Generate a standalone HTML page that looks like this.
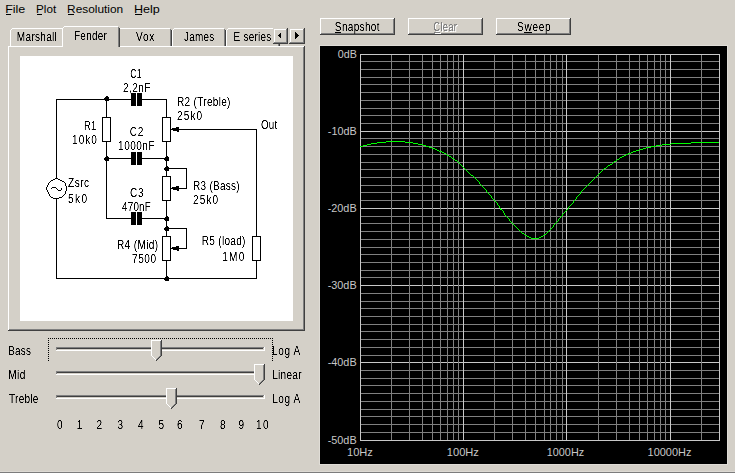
<!DOCTYPE html>
<html><head><meta charset="utf-8"><style>
html,body{margin:0;padding:0;background:#D4D0C8;}
body{width:735px;height:473px;overflow:hidden;}
svg{display:block;font-family:"Liberation Sans",sans-serif;font-size:11px;}
rect{shape-rendering:crispEdges;}
text.b{filter:url(#crisp);}

</style></head><body>
<svg width="735" height="473" viewBox="0 0 735 473">
<defs><filter id="crisp" x="-0.2" y="-0.6" width="1.4" height="2.2" color-interpolation-filters="sRGB"><feComponentTransfer><feFuncA type="linear" slope="2" intercept="-0.45"/></feComponentTransfer></filter></defs>
<rect x="0" y="0" width="735" height="473" fill="#D4D0C8"/>
<rect x="0" y="471" width="735" height="1" fill="#DDDAD4"/>
<rect x="0" y="472" width="735" height="1" fill="#7C7C7C"/>
<text x="5.16" y="13" font-size="11" fill="#000000" textLength="20.17" lengthAdjust="spacingAndGlyphs" class="m">File</text>
<rect x="6" y="14" width="5" height="1" fill="#000000"/>
<text x="36.04" y="13" font-size="11" fill="#000000" textLength="20.13" lengthAdjust="spacingAndGlyphs" class="m">Plot</text>
<rect x="37" y="14" width="5" height="1" fill="#000000"/>
<text x="67.12" y="13" font-size="11" fill="#000000" textLength="56.04" lengthAdjust="spacingAndGlyphs" class="m">Resolution</text>
<rect x="68" y="14" width="6" height="1" fill="#000000"/>
<text x="133.96" y="13" font-size="11" fill="#000000" textLength="25.86" lengthAdjust="spacingAndGlyphs" class="m">Help</text>
<rect x="135" y="14" width="7" height="1" fill="#000000"/>
<rect x="10" y="30" width="1" height="16" fill="#FFFFFF"/>
<rect x="11" y="29" width="1" height="1" fill="#FFFFFF"/>
<rect x="12" y="28" width="50" height="1" fill="#FFFFFF"/>
<rect x="62" y="29" width="1" height="17" fill="#808080"/>
<rect x="63" y="30" width="1" height="16" fill="#404040"/>
<rect x="118" y="30" width="1" height="16" fill="#FFFFFF"/>
<rect x="119" y="29" width="1" height="1" fill="#FFFFFF"/>
<rect x="120" y="28" width="50" height="1" fill="#FFFFFF"/>
<rect x="170" y="29" width="1" height="17" fill="#808080"/>
<rect x="171" y="30" width="1" height="16" fill="#404040"/>
<rect x="172" y="30" width="1" height="16" fill="#FFFFFF"/>
<rect x="173" y="29" width="1" height="1" fill="#FFFFFF"/>
<rect x="174" y="28" width="50" height="1" fill="#FFFFFF"/>
<rect x="224" y="29" width="1" height="17" fill="#808080"/>
<rect x="225" y="30" width="1" height="16" fill="#404040"/>
<rect x="226" y="30" width="1" height="16" fill="#FFFFFF"/>
<rect x="227" y="29" width="1" height="1" fill="#FFFFFF"/>
<rect x="228" y="28" width="50" height="1" fill="#FFFFFF"/>
<rect x="278" y="29" width="1" height="17" fill="#808080"/>
<rect x="279" y="30" width="1" height="16" fill="#404040"/>
<text transform="translate(16.86,41) scale(0.8400,1)" x="0" y="0" font-size="12" fill="#000000" letter-spacing="0.313" class="b">Marshall</text>
<text transform="translate(136.10,41) scale(0.8400,1)" x="0" y="0" font-size="12" fill="#000000" letter-spacing="0.833" class="b">Vox</text>
<text transform="translate(184.10,41) scale(0.8260,1)" x="0" y="0" font-size="12" fill="#000000" letter-spacing="0.300" class="b">James</text>
<text transform="translate(233.57,41) scale(0.8277,1)" x="0" y="0" font-size="12" fill="#000000" letter-spacing="0.300" class="b">E series</text>
<rect x="62" y="26" width="58" height="21" fill="#D4D0C8"/>
<rect x="62" y="28" width="1" height="19" fill="#FFFFFF"/>
<rect x="63" y="27" width="1" height="1" fill="#FFFFFF"/>
<rect x="64" y="26" width="54" height="1" fill="#FFFFFF"/>
<rect x="118" y="27" width="1" height="20" fill="#808080"/>
<rect x="119" y="28" width="1" height="19" fill="#404040"/>
<text transform="translate(74.07,40) scale(0.8260,1)" x="0" y="0" font-size="12" fill="#000000" letter-spacing="0.300" class="b">Fender</text>
<rect x="8" y="46" width="55" height="1" fill="#FFFFFF"/>
<rect x="120" y="46" width="184" height="1" fill="#FFFFFF"/>
<rect x="8" y="46" width="1" height="284" fill="#FFFFFF"/>
<rect x="303" y="47" width="1" height="283" fill="#808080"/>
<rect x="304" y="46" width="1" height="285" fill="#404040"/>
<rect x="9" y="329" width="295" height="1" fill="#808080"/>
<rect x="8" y="330" width="297" height="1" fill="#404040"/>
<rect x="273" y="28" width="15" height="16" fill="#D4D0C8"/>
<rect x="274" y="29" width="13" height="1" fill="#FFFFFF"/>
<rect x="274" y="29" width="1" height="14" fill="#FFFFFF"/>
<rect x="286" y="29" width="1" height="14" fill="#808080"/>
<rect x="274" y="42" width="13" height="1" fill="#808080"/>
<rect x="287" y="28" width="1" height="16" fill="#404040"/>
<rect x="273" y="43" width="15" height="1" fill="#404040"/>
<rect x="289" y="28" width="16" height="16" fill="#D4D0C8"/>
<rect x="290" y="29" width="14" height="1" fill="#FFFFFF"/>
<rect x="290" y="29" width="1" height="14" fill="#FFFFFF"/>
<rect x="303" y="29" width="1" height="14" fill="#808080"/>
<rect x="290" y="42" width="14" height="1" fill="#808080"/>
<rect x="304" y="28" width="1" height="16" fill="#404040"/>
<rect x="289" y="43" width="16" height="1" fill="#404040"/>
<rect x="278" y="35" width="1" height="1" fill="#000000"/>
<rect x="279" y="34" width="1" height="3" fill="#000000"/>
<rect x="280" y="33" width="1" height="5" fill="#000000"/>
<rect x="295" y="32" width="1" height="7" fill="#000000"/>
<rect x="296" y="33" width="1" height="5" fill="#000000"/>
<rect x="297" y="34" width="1" height="3" fill="#000000"/>
<rect x="298" y="35" width="1" height="1" fill="#000000"/>
<rect x="20" y="56" width="273" height="265" fill="#FFFFFF"/>
<rect x="320" y="18" width="75" height="1" fill="#FFFFFF"/>
<rect x="320" y="18" width="1" height="17" fill="#FFFFFF"/>
<rect x="394" y="18" width="1" height="17" fill="#404040"/>
<rect x="320" y="34" width="75" height="1" fill="#404040"/>
<rect x="393" y="19" width="1" height="15" fill="#808080"/>
<rect x="321" y="33" width="73" height="1" fill="#808080"/>
<rect x="408" y="18" width="75" height="1" fill="#FFFFFF"/>
<rect x="408" y="18" width="1" height="17" fill="#FFFFFF"/>
<rect x="482" y="18" width="1" height="17" fill="#404040"/>
<rect x="408" y="34" width="75" height="1" fill="#404040"/>
<rect x="481" y="19" width="1" height="15" fill="#808080"/>
<rect x="409" y="33" width="73" height="1" fill="#808080"/>
<rect x="496" y="18" width="75" height="1" fill="#FFFFFF"/>
<rect x="496" y="18" width="1" height="17" fill="#FFFFFF"/>
<rect x="570" y="18" width="1" height="17" fill="#404040"/>
<rect x="496" y="34" width="75" height="1" fill="#404040"/>
<rect x="569" y="19" width="1" height="15" fill="#808080"/>
<rect x="497" y="33" width="73" height="1" fill="#808080"/>
<text transform="translate(334.86,31) scale(0.8400,1)" x="0" y="0" font-size="12" fill="#000000" letter-spacing="0.357" class="b">Snapshot</text>
<rect x="335" y="32" width="6" height="1" fill="#000000"/>
<text transform="translate(434.21,32) scale(0.7911,1)" x="0" y="0" font-size="12" fill="#FFFFFF" letter-spacing="0.300" class="b">Clear</text>
<rect x="435" y="33" width="6" height="1" fill="#FFFFFF"/>
<text transform="translate(433.21,31) scale(0.7911,1)" x="0" y="0" font-size="12" fill="#808080" letter-spacing="0.300" class="b">Clear</text>
<rect x="434" y="32" width="6" height="1" fill="#808080"/>
<text transform="translate(516.96,31) scale(0.8400,1)" x="0" y="0" font-size="12" fill="#000000" letter-spacing="0.863" class="b">Sweep</text>
<rect x="524" y="32" width="8" height="1" fill="#000000"/>
<rect x="48" y="338" width="1" height="1" fill="#000000"/>
<rect x="50" y="338" width="1" height="1" fill="#000000"/>
<rect x="52" y="338" width="1" height="1" fill="#000000"/>
<rect x="54" y="338" width="1" height="1" fill="#000000"/>
<rect x="56" y="338" width="1" height="1" fill="#000000"/>
<rect x="58" y="338" width="1" height="1" fill="#000000"/>
<rect x="60" y="338" width="1" height="1" fill="#000000"/>
<rect x="62" y="338" width="1" height="1" fill="#000000"/>
<rect x="64" y="338" width="1" height="1" fill="#000000"/>
<rect x="66" y="338" width="1" height="1" fill="#000000"/>
<rect x="68" y="338" width="1" height="1" fill="#000000"/>
<rect x="70" y="338" width="1" height="1" fill="#000000"/>
<rect x="72" y="338" width="1" height="1" fill="#000000"/>
<rect x="74" y="338" width="1" height="1" fill="#000000"/>
<rect x="76" y="338" width="1" height="1" fill="#000000"/>
<rect x="78" y="338" width="1" height="1" fill="#000000"/>
<rect x="80" y="338" width="1" height="1" fill="#000000"/>
<rect x="82" y="338" width="1" height="1" fill="#000000"/>
<rect x="84" y="338" width="1" height="1" fill="#000000"/>
<rect x="86" y="338" width="1" height="1" fill="#000000"/>
<rect x="88" y="338" width="1" height="1" fill="#000000"/>
<rect x="90" y="338" width="1" height="1" fill="#000000"/>
<rect x="92" y="338" width="1" height="1" fill="#000000"/>
<rect x="94" y="338" width="1" height="1" fill="#000000"/>
<rect x="96" y="338" width="1" height="1" fill="#000000"/>
<rect x="98" y="338" width="1" height="1" fill="#000000"/>
<rect x="100" y="338" width="1" height="1" fill="#000000"/>
<rect x="102" y="338" width="1" height="1" fill="#000000"/>
<rect x="104" y="338" width="1" height="1" fill="#000000"/>
<rect x="106" y="338" width="1" height="1" fill="#000000"/>
<rect x="108" y="338" width="1" height="1" fill="#000000"/>
<rect x="110" y="338" width="1" height="1" fill="#000000"/>
<rect x="112" y="338" width="1" height="1" fill="#000000"/>
<rect x="114" y="338" width="1" height="1" fill="#000000"/>
<rect x="116" y="338" width="1" height="1" fill="#000000"/>
<rect x="118" y="338" width="1" height="1" fill="#000000"/>
<rect x="120" y="338" width="1" height="1" fill="#000000"/>
<rect x="122" y="338" width="1" height="1" fill="#000000"/>
<rect x="124" y="338" width="1" height="1" fill="#000000"/>
<rect x="126" y="338" width="1" height="1" fill="#000000"/>
<rect x="128" y="338" width="1" height="1" fill="#000000"/>
<rect x="130" y="338" width="1" height="1" fill="#000000"/>
<rect x="132" y="338" width="1" height="1" fill="#000000"/>
<rect x="134" y="338" width="1" height="1" fill="#000000"/>
<rect x="136" y="338" width="1" height="1" fill="#000000"/>
<rect x="138" y="338" width="1" height="1" fill="#000000"/>
<rect x="140" y="338" width="1" height="1" fill="#000000"/>
<rect x="142" y="338" width="1" height="1" fill="#000000"/>
<rect x="144" y="338" width="1" height="1" fill="#000000"/>
<rect x="146" y="338" width="1" height="1" fill="#000000"/>
<rect x="148" y="338" width="1" height="1" fill="#000000"/>
<rect x="150" y="338" width="1" height="1" fill="#000000"/>
<rect x="152" y="338" width="1" height="1" fill="#000000"/>
<rect x="154" y="338" width="1" height="1" fill="#000000"/>
<rect x="156" y="338" width="1" height="1" fill="#000000"/>
<rect x="158" y="338" width="1" height="1" fill="#000000"/>
<rect x="160" y="338" width="1" height="1" fill="#000000"/>
<rect x="162" y="338" width="1" height="1" fill="#000000"/>
<rect x="164" y="338" width="1" height="1" fill="#000000"/>
<rect x="166" y="338" width="1" height="1" fill="#000000"/>
<rect x="168" y="338" width="1" height="1" fill="#000000"/>
<rect x="170" y="338" width="1" height="1" fill="#000000"/>
<rect x="172" y="338" width="1" height="1" fill="#000000"/>
<rect x="174" y="338" width="1" height="1" fill="#000000"/>
<rect x="176" y="338" width="1" height="1" fill="#000000"/>
<rect x="178" y="338" width="1" height="1" fill="#000000"/>
<rect x="180" y="338" width="1" height="1" fill="#000000"/>
<rect x="182" y="338" width="1" height="1" fill="#000000"/>
<rect x="184" y="338" width="1" height="1" fill="#000000"/>
<rect x="186" y="338" width="1" height="1" fill="#000000"/>
<rect x="188" y="338" width="1" height="1" fill="#000000"/>
<rect x="190" y="338" width="1" height="1" fill="#000000"/>
<rect x="192" y="338" width="1" height="1" fill="#000000"/>
<rect x="194" y="338" width="1" height="1" fill="#000000"/>
<rect x="196" y="338" width="1" height="1" fill="#000000"/>
<rect x="198" y="338" width="1" height="1" fill="#000000"/>
<rect x="200" y="338" width="1" height="1" fill="#000000"/>
<rect x="202" y="338" width="1" height="1" fill="#000000"/>
<rect x="204" y="338" width="1" height="1" fill="#000000"/>
<rect x="206" y="338" width="1" height="1" fill="#000000"/>
<rect x="208" y="338" width="1" height="1" fill="#000000"/>
<rect x="210" y="338" width="1" height="1" fill="#000000"/>
<rect x="212" y="338" width="1" height="1" fill="#000000"/>
<rect x="214" y="338" width="1" height="1" fill="#000000"/>
<rect x="216" y="338" width="1" height="1" fill="#000000"/>
<rect x="218" y="338" width="1" height="1" fill="#000000"/>
<rect x="220" y="338" width="1" height="1" fill="#000000"/>
<rect x="222" y="338" width="1" height="1" fill="#000000"/>
<rect x="224" y="338" width="1" height="1" fill="#000000"/>
<rect x="226" y="338" width="1" height="1" fill="#000000"/>
<rect x="228" y="338" width="1" height="1" fill="#000000"/>
<rect x="230" y="338" width="1" height="1" fill="#000000"/>
<rect x="232" y="338" width="1" height="1" fill="#000000"/>
<rect x="234" y="338" width="1" height="1" fill="#000000"/>
<rect x="236" y="338" width="1" height="1" fill="#000000"/>
<rect x="238" y="338" width="1" height="1" fill="#000000"/>
<rect x="240" y="338" width="1" height="1" fill="#000000"/>
<rect x="242" y="338" width="1" height="1" fill="#000000"/>
<rect x="244" y="338" width="1" height="1" fill="#000000"/>
<rect x="246" y="338" width="1" height="1" fill="#000000"/>
<rect x="248" y="338" width="1" height="1" fill="#000000"/>
<rect x="250" y="338" width="1" height="1" fill="#000000"/>
<rect x="252" y="338" width="1" height="1" fill="#000000"/>
<rect x="254" y="338" width="1" height="1" fill="#000000"/>
<rect x="256" y="338" width="1" height="1" fill="#000000"/>
<rect x="258" y="338" width="1" height="1" fill="#000000"/>
<rect x="260" y="338" width="1" height="1" fill="#000000"/>
<rect x="262" y="338" width="1" height="1" fill="#000000"/>
<rect x="264" y="338" width="1" height="1" fill="#000000"/>
<rect x="266" y="338" width="1" height="1" fill="#000000"/>
<rect x="268" y="338" width="1" height="1" fill="#000000"/>
<rect x="270" y="338" width="1" height="1" fill="#000000"/>
<rect x="272" y="338" width="1" height="1" fill="#000000"/>
<rect x="48" y="338" width="1" height="1" fill="#000000"/>
<rect x="272" y="338" width="1" height="1" fill="#000000"/>
<rect x="48" y="340" width="1" height="1" fill="#000000"/>
<rect x="272" y="340" width="1" height="1" fill="#000000"/>
<rect x="48" y="342" width="1" height="1" fill="#000000"/>
<rect x="272" y="342" width="1" height="1" fill="#000000"/>
<rect x="48" y="344" width="1" height="1" fill="#000000"/>
<rect x="272" y="344" width="1" height="1" fill="#000000"/>
<rect x="48" y="346" width="1" height="1" fill="#000000"/>
<rect x="272" y="346" width="1" height="1" fill="#000000"/>
<rect x="48" y="348" width="1" height="1" fill="#000000"/>
<rect x="272" y="348" width="1" height="1" fill="#000000"/>
<rect x="48" y="350" width="1" height="1" fill="#000000"/>
<rect x="272" y="350" width="1" height="1" fill="#000000"/>
<rect x="48" y="352" width="1" height="1" fill="#000000"/>
<rect x="272" y="352" width="1" height="1" fill="#000000"/>
<rect x="48" y="354" width="1" height="1" fill="#000000"/>
<rect x="272" y="354" width="1" height="1" fill="#000000"/>
<rect x="48" y="356" width="1" height="1" fill="#000000"/>
<rect x="272" y="356" width="1" height="1" fill="#000000"/>
<rect x="48" y="358" width="1" height="1" fill="#000000"/>
<rect x="272" y="358" width="1" height="1" fill="#000000"/>
<rect x="48" y="360" width="1" height="1" fill="#000000"/>
<rect x="272" y="360" width="1" height="1" fill="#000000"/>
<rect x="56" y="347" width="208" height="1" fill="#808080"/>
<rect x="57" y="348" width="206" height="1" fill="#404040"/>
<rect x="56" y="350" width="209" height="1" fill="#FFFFFF"/>
<rect x="56" y="347" width="1" height="3" fill="#808080"/>
<rect x="264" y="347" width="1" height="4" fill="#FFFFFF"/>
<polygon points="151,340 162,340 162,356 156.5,360.5 151,356" fill="#D4D0C8"/>
<rect x="151" y="340" width="10" height="1" fill="#FFFFFF"/>
<rect x="151" y="340" width="1" height="16" fill="#FFFFFF"/>
<rect x="160" y="341" width="1" height="15" fill="#808080"/>
<rect x="161" y="340" width="1" height="16" fill="#404040"/>
<rect x="152" y="356" width="1" height="1" fill="#FFFFFF"/>
<rect x="160" y="356" width="1" height="1" fill="#404040"/>
<rect x="159" y="356" width="1" height="1" fill="#808080"/>
<rect x="153" y="357" width="1" height="1" fill="#FFFFFF"/>
<rect x="159" y="357" width="1" height="1" fill="#404040"/>
<rect x="158" y="357" width="1" height="1" fill="#808080"/>
<rect x="154" y="358" width="1" height="1" fill="#FFFFFF"/>
<rect x="158" y="358" width="1" height="1" fill="#404040"/>
<rect x="157" y="358" width="1" height="1" fill="#808080"/>
<rect x="155" y="359" width="1" height="1" fill="#FFFFFF"/>
<rect x="157" y="359" width="1" height="1" fill="#404040"/>
<rect x="156" y="359" width="1" height="1" fill="#808080"/>
<rect x="156" y="360" width="1" height="1" fill="#FFFFFF"/>
<rect x="156" y="360" width="1" height="1" fill="#404040"/>
<rect x="156" y="360" width="1" height="1" fill="#404040"/>
<rect x="56" y="371" width="208" height="1" fill="#808080"/>
<rect x="57" y="372" width="206" height="1" fill="#404040"/>
<rect x="56" y="374" width="209" height="1" fill="#FFFFFF"/>
<rect x="56" y="371" width="1" height="3" fill="#808080"/>
<rect x="264" y="371" width="1" height="4" fill="#FFFFFF"/>
<polygon points="254,364 265,364 265,380 259.5,384.5 254,380" fill="#D4D0C8"/>
<rect x="254" y="364" width="10" height="1" fill="#FFFFFF"/>
<rect x="254" y="364" width="1" height="16" fill="#FFFFFF"/>
<rect x="263" y="365" width="1" height="15" fill="#808080"/>
<rect x="264" y="364" width="1" height="16" fill="#404040"/>
<rect x="255" y="380" width="1" height="1" fill="#FFFFFF"/>
<rect x="263" y="380" width="1" height="1" fill="#404040"/>
<rect x="262" y="380" width="1" height="1" fill="#808080"/>
<rect x="256" y="381" width="1" height="1" fill="#FFFFFF"/>
<rect x="262" y="381" width="1" height="1" fill="#404040"/>
<rect x="261" y="381" width="1" height="1" fill="#808080"/>
<rect x="257" y="382" width="1" height="1" fill="#FFFFFF"/>
<rect x="261" y="382" width="1" height="1" fill="#404040"/>
<rect x="260" y="382" width="1" height="1" fill="#808080"/>
<rect x="258" y="383" width="1" height="1" fill="#FFFFFF"/>
<rect x="260" y="383" width="1" height="1" fill="#404040"/>
<rect x="259" y="383" width="1" height="1" fill="#808080"/>
<rect x="259" y="384" width="1" height="1" fill="#FFFFFF"/>
<rect x="259" y="384" width="1" height="1" fill="#404040"/>
<rect x="259" y="384" width="1" height="1" fill="#404040"/>
<rect x="56" y="395" width="208" height="1" fill="#808080"/>
<rect x="57" y="396" width="206" height="1" fill="#404040"/>
<rect x="56" y="398" width="209" height="1" fill="#FFFFFF"/>
<rect x="56" y="395" width="1" height="3" fill="#808080"/>
<rect x="264" y="395" width="1" height="4" fill="#FFFFFF"/>
<polygon points="166,388 177,388 177,404 171.5,408.5 166,404" fill="#D4D0C8"/>
<rect x="166" y="388" width="10" height="1" fill="#FFFFFF"/>
<rect x="166" y="388" width="1" height="16" fill="#FFFFFF"/>
<rect x="175" y="389" width="1" height="15" fill="#808080"/>
<rect x="176" y="388" width="1" height="16" fill="#404040"/>
<rect x="167" y="404" width="1" height="1" fill="#FFFFFF"/>
<rect x="175" y="404" width="1" height="1" fill="#404040"/>
<rect x="174" y="404" width="1" height="1" fill="#808080"/>
<rect x="168" y="405" width="1" height="1" fill="#FFFFFF"/>
<rect x="174" y="405" width="1" height="1" fill="#404040"/>
<rect x="173" y="405" width="1" height="1" fill="#808080"/>
<rect x="169" y="406" width="1" height="1" fill="#FFFFFF"/>
<rect x="173" y="406" width="1" height="1" fill="#404040"/>
<rect x="172" y="406" width="1" height="1" fill="#808080"/>
<rect x="170" y="407" width="1" height="1" fill="#FFFFFF"/>
<rect x="172" y="407" width="1" height="1" fill="#404040"/>
<rect x="171" y="407" width="1" height="1" fill="#808080"/>
<rect x="171" y="408" width="1" height="1" fill="#FFFFFF"/>
<rect x="171" y="408" width="1" height="1" fill="#404040"/>
<rect x="171" y="408" width="1" height="1" fill="#404040"/>
<text transform="translate(8.17,355) scale(0.8253,1)" x="0" y="0" font-size="12" fill="#000000" letter-spacing="0.300" class="b">Bass</text>
<text transform="translate(8.26,379) scale(0.8400,1)" x="0" y="0" font-size="12" fill="#000000" letter-spacing="0.524" class="b">Mid</text>
<text transform="translate(9.10,403) scale(0.8377,1)" x="0" y="0" font-size="12" fill="#000000" letter-spacing="0.300" class="b">Treble</text>
<text transform="translate(272.06,355) scale(0.8400,1)" x="0" y="0" font-size="12" fill="#000000" letter-spacing="0.685" class="b">Log A</text>
<text transform="translate(272.16,379) scale(0.8400,1)" x="0" y="0" font-size="12" fill="#000000" letter-spacing="0.314" class="b">Linear</text>
<text transform="translate(272.16,403) scale(0.8400,1)" x="0" y="0" font-size="12" fill="#000000" letter-spacing="0.655" class="b">Log A</text>
<text transform="translate(56.93,429) scale(0.8400,1)" x="0" y="0" font-size="12" fill="#000000" letter-spacing="0.000" class="b">0</text>
<text transform="translate(76.86,429) scale(0.8400,1)" x="0" y="0" font-size="12" fill="#000000" letter-spacing="0.000" class="b">1</text>
<text transform="translate(96.61,429) scale(0.8400,1)" x="0" y="0" font-size="12" fill="#000000" letter-spacing="0.000" class="b">2</text>
<text transform="translate(117.61,429) scale(0.8400,1)" x="0" y="0" font-size="12" fill="#000000" letter-spacing="0.000" class="b">3</text>
<text transform="translate(138.06,429) scale(0.8400,1)" x="0" y="0" font-size="12" fill="#000000" letter-spacing="0.000" class="b">4</text>
<text transform="translate(158.61,429) scale(0.8400,1)" x="0" y="0" font-size="12" fill="#000000" letter-spacing="0.000" class="b">5</text>
<text transform="translate(177.06,429) scale(0.8400,1)" x="0" y="0" font-size="12" fill="#000000" letter-spacing="0.000" class="b">6</text>
<text transform="translate(198.93,429) scale(0.8400,1)" x="0" y="0" font-size="12" fill="#000000" letter-spacing="0.000" class="b">7</text>
<text transform="translate(219.88,429) scale(0.8400,1)" x="0" y="0" font-size="12" fill="#000000" letter-spacing="0.000" class="b">8</text>
<text transform="translate(238.61,429) scale(0.8400,1)" x="0" y="0" font-size="12" fill="#000000" letter-spacing="0.000" class="b">9</text>
<text transform="translate(256.06,429) scale(0.8400,1)" x="0" y="0" font-size="12" fill="#000000" letter-spacing="1.690" class="b">10</text>
<rect x="319" y="45" width="409" height="420" fill="#E0DDD7"/>
<rect x="320" y="46" width="407" height="418" fill="#000000"/>
<rect x="360" y="54" width="360" height="1" fill="#C8C8C8"/>
<rect x="360" y="61" width="360" height="1" fill="#808080"/>
<rect x="360" y="69" width="360" height="1" fill="#808080"/>
<rect x="360" y="77" width="360" height="1" fill="#808080"/>
<rect x="360" y="84" width="360" height="1" fill="#808080"/>
<rect x="360" y="92" width="360" height="1" fill="#808080"/>
<rect x="360" y="100" width="360" height="1" fill="#808080"/>
<rect x="360" y="108" width="360" height="1" fill="#808080"/>
<rect x="360" y="115" width="360" height="1" fill="#808080"/>
<rect x="360" y="123" width="360" height="1" fill="#808080"/>
<rect x="360" y="131" width="360" height="1" fill="#C8C8C8"/>
<rect x="360" y="138" width="360" height="1" fill="#808080"/>
<rect x="360" y="146" width="360" height="1" fill="#808080"/>
<rect x="360" y="154" width="360" height="1" fill="#808080"/>
<rect x="360" y="162" width="360" height="1" fill="#808080"/>
<rect x="360" y="169" width="360" height="1" fill="#808080"/>
<rect x="360" y="177" width="360" height="1" fill="#808080"/>
<rect x="360" y="185" width="360" height="1" fill="#808080"/>
<rect x="360" y="192" width="360" height="1" fill="#808080"/>
<rect x="360" y="200" width="360" height="1" fill="#808080"/>
<rect x="360" y="208" width="360" height="1" fill="#C8C8C8"/>
<rect x="360" y="216" width="360" height="1" fill="#808080"/>
<rect x="360" y="223" width="360" height="1" fill="#808080"/>
<rect x="360" y="231" width="360" height="1" fill="#808080"/>
<rect x="360" y="239" width="360" height="1" fill="#808080"/>
<rect x="360" y="247" width="360" height="1" fill="#808080"/>
<rect x="360" y="254" width="360" height="1" fill="#808080"/>
<rect x="360" y="262" width="360" height="1" fill="#808080"/>
<rect x="360" y="270" width="360" height="1" fill="#808080"/>
<rect x="360" y="277" width="360" height="1" fill="#808080"/>
<rect x="360" y="285" width="360" height="1" fill="#C8C8C8"/>
<rect x="360" y="293" width="360" height="1" fill="#808080"/>
<rect x="360" y="301" width="360" height="1" fill="#808080"/>
<rect x="360" y="308" width="360" height="1" fill="#808080"/>
<rect x="360" y="316" width="360" height="1" fill="#808080"/>
<rect x="360" y="324" width="360" height="1" fill="#808080"/>
<rect x="360" y="331" width="360" height="1" fill="#808080"/>
<rect x="360" y="339" width="360" height="1" fill="#808080"/>
<rect x="360" y="347" width="360" height="1" fill="#808080"/>
<rect x="360" y="355" width="360" height="1" fill="#808080"/>
<rect x="360" y="362" width="360" height="1" fill="#C8C8C8"/>
<rect x="360" y="370" width="360" height="1" fill="#808080"/>
<rect x="360" y="378" width="360" height="1" fill="#808080"/>
<rect x="360" y="385" width="360" height="1" fill="#808080"/>
<rect x="360" y="393" width="360" height="1" fill="#808080"/>
<rect x="360" y="401" width="360" height="1" fill="#808080"/>
<rect x="360" y="409" width="360" height="1" fill="#808080"/>
<rect x="360" y="416" width="360" height="1" fill="#808080"/>
<rect x="360" y="424" width="360" height="1" fill="#808080"/>
<rect x="360" y="432" width="360" height="1" fill="#808080"/>
<rect x="360" y="440" width="360" height="1" fill="#C8C8C8"/>
<rect x="360" y="54" width="1" height="387" fill="#C8C8C8"/>
<rect x="391" y="54" width="1" height="387" fill="#808080"/>
<rect x="409" y="54" width="1" height="387" fill="#808080"/>
<rect x="422" y="54" width="1" height="387" fill="#808080"/>
<rect x="432" y="54" width="1" height="387" fill="#808080"/>
<rect x="440" y="54" width="1" height="387" fill="#808080"/>
<rect x="447" y="54" width="1" height="387" fill="#808080"/>
<rect x="453" y="54" width="1" height="387" fill="#808080"/>
<rect x="458" y="54" width="1" height="387" fill="#808080"/>
<rect x="463" y="54" width="1" height="387" fill="#C8C8C8"/>
<rect x="494" y="54" width="1" height="387" fill="#808080"/>
<rect x="512" y="54" width="1" height="387" fill="#808080"/>
<rect x="525" y="54" width="1" height="387" fill="#808080"/>
<rect x="535" y="54" width="1" height="387" fill="#808080"/>
<rect x="544" y="54" width="1" height="387" fill="#808080"/>
<rect x="550" y="54" width="1" height="387" fill="#808080"/>
<rect x="556" y="54" width="1" height="387" fill="#808080"/>
<rect x="562" y="54" width="1" height="387" fill="#808080"/>
<rect x="566" y="54" width="1" height="387" fill="#C8C8C8"/>
<rect x="598" y="54" width="1" height="387" fill="#808080"/>
<rect x="616" y="54" width="1" height="387" fill="#808080"/>
<rect x="629" y="54" width="1" height="387" fill="#808080"/>
<rect x="639" y="54" width="1" height="387" fill="#808080"/>
<rect x="647" y="54" width="1" height="387" fill="#808080"/>
<rect x="654" y="54" width="1" height="387" fill="#808080"/>
<rect x="660" y="54" width="1" height="387" fill="#808080"/>
<rect x="665" y="54" width="1" height="387" fill="#808080"/>
<rect x="670" y="54" width="1" height="387" fill="#C8C8C8"/>
<rect x="701" y="54" width="1" height="387" fill="#808080"/>
<rect x="719" y="54" width="1" height="387" fill="#808080"/>
<rect x="719" y="54" width="1" height="387" fill="#C8C8C8"/>
<rect x="360" y="440" width="360" height="1" fill="#C8C8C8"/>
<rect x="360" y="54" width="360" height="1" fill="#C8C8C8"/>
<text x="337.80" y="58" font-size="11" fill="#C8C8C8" textLength="19.06" lengthAdjust="spacingAndGlyphs" class="g">0dB</text>
<text x="327.80" y="135" font-size="11" fill="#C8C8C8" textLength="28.85" lengthAdjust="spacingAndGlyphs" class="g">-10dB</text>
<text x="327.70" y="212" font-size="11" fill="#C8C8C8" textLength="28.95" lengthAdjust="spacingAndGlyphs" class="g">-20dB</text>
<text x="327.70" y="289" font-size="11" fill="#C8C8C8" textLength="28.95" lengthAdjust="spacingAndGlyphs" class="g">-30dB</text>
<text x="327.70" y="366" font-size="11" fill="#C8C8C8" textLength="28.95" lengthAdjust="spacingAndGlyphs" class="g">-40dB</text>
<text x="327.70" y="444" font-size="11" fill="#C8C8C8" textLength="28.95" lengthAdjust="spacingAndGlyphs" class="g">-50dB</text>
<text x="346.99" y="456" font-size="11" fill="#C8C8C8" textLength="25.9" lengthAdjust="spacingAndGlyphs" class="g">10Hz</text>
<text x="446.79" y="456" font-size="11" fill="#C8C8C8" textLength="32.11" lengthAdjust="spacingAndGlyphs" class="g">100Hz</text>
<text x="546.82" y="456" font-size="11" fill="#C8C8C8" textLength="37.31" lengthAdjust="spacingAndGlyphs" class="g">1000Hz</text>
<text x="647.60" y="456" font-size="11" fill="#C8C8C8" textLength="43.84" lengthAdjust="spacingAndGlyphs" class="g">10000Hz</text>
<path d="M531,238h8v1h-8zM470,174h1v1h-1zM598,174h1v1h-1zM371,143h6v1h-6zM413,143h5v1h-5zM671,143h20v1h-20zM386,141h19v1h-19zM360,146h3v1h-3zM426,146h3v1h-3zM651,146h5v1h-5zM525,235h2v1h-2zM543,235h1v1h-1zM377,142h9v1h-9zM405,142h8v1h-8zM691,142h28v1h-28zM480,184h1v1h-1zM588,184h1v1h-1zM439,151h3v1h-3zM633,151h3v1h-3zM363,145h4v1h-4zM423,145h3v1h-3zM656,145h6v1h-6zM527,236h2v1h-2zM541,236h2v1h-2zM529,237h2v1h-2zM539,237h2v1h-2zM435,149h2v1h-2zM639,149h4v1h-4zM502,210h1v1h-1zM566,210h1v1h-1zM524,234h1v1h-1zM544,234h2v1h-2zM503,211h1v1h-1zM565,211h1v1h-1zM506,216h1v1h-1zM561,216h1v1h-1zM447,155h2v1h-2zM624,155h2v1h-2zM367,144h4v1h-4zM418,144h5v1h-5zM662,144h9v1h-9zM429,147h3v1h-3zM646,147h5v1h-5zM497,203h1v1h-1zM572,203h1v1h-1zM493,199h1v1h-1zM575,199h1v1h-1zM474,177h1v1h-1zM595,177h1v1h-1zM513,224h1v1h-1zM554,224h1v1h-1zM444,153h2v1h-2zM628,153h3v1h-3zM491,196h1v1h-1zM577,196h1v1h-1zM514,225h1v1h-1zM553,225h1v1h-1zM500,209h2v1h-2zM567,209h1v1h-1zM498,205h1v1h-1zM570,205h1v1h-1zM517,228h1v1h-1zM551,228h1v1h-1zM520,231h1v1h-1zM548,231h1v1h-1zM485,189h1v1h-1zM583,189h1v1h-1zM477,180h1v1h-1zM592,180h1v1h-1zM521,232h1v1h-1zM547,232h1v1h-1zM451,157h1v1h-1zM620,157h2v1h-2zM490,195h1v1h-1zM578,195h1v1h-1zM458,162h1v1h-1zM613,162h1v1h-1zM484,188h1v1h-1zM584,188h1v1h-1zM508,218h1v1h-1zM559,218h1v1h-1zM494,200h1v1h-1zM574,200h1v1h-1zM442,152h2v1h-2zM631,152h2v1h-2zM476,179h1v1h-1zM593,179h1v1h-1zM505,215h1v1h-1zM562,215h1v1h-1zM495,201h1v1h-1zM573,201h1v1h-1zM479,182h1v1h-1zM590,182h1v1h-1zM465,169h1v1h-1zM603,169h1v1h-1zM504,214h1v1h-1zM562,214h1v1h-1zM454,159h1v1h-1zM617,159h2v1h-2zM466,170h1v1h-1zM602,170h1v1h-1zM432,148h3v1h-3zM643,148h3v1h-3zM487,192h1v1h-1zM580,192h1v1h-1zM449,156h2v1h-2zM622,156h2v1h-2zM464,168h1v1h-1zM604,168h2v1h-2zM452,158h2v1h-2zM619,158h1v1h-1zM509,220h1v1h-1zM558,220h1v1h-1zM522,233h2v1h-2zM546,233h1v1h-1zM486,191h1v1h-1zM581,191h1v1h-1zM471,175h2v1h-2zM597,175h1v1h-1zM516,227h1v1h-1zM552,227h1v1h-1zM479,183h1v1h-1zM589,183h1v1h-1zM515,226h1v1h-1zM553,226h1v1h-1zM446,154h1v1h-1zM626,154h2v1h-2zM486,190h1v1h-1zM582,190h1v1h-1zM437,150h2v1h-2zM636,150h3v1h-3zM499,206h1v1h-1zM569,206h1v1h-1zM483,187h1v1h-1zM585,187h1v1h-1zM518,229h1v1h-1zM550,229h1v1h-1zM488,193h1v1h-1zM580,193h1v1h-1zM497,204h1v1h-1zM571,204h1v1h-1zM459,163h1v1h-1zM612,163h1v1h-1zM478,181h1v1h-1zM591,181h1v1h-1zM507,217h1v1h-1zM560,217h1v1h-1zM455,160h2v1h-2zM616,160h1v1h-1zM461,165h1v1h-1zM608,165h2v1h-2zM511,222h1v1h-1zM556,222h1v1h-1zM460,164h1v1h-1zM610,164h2v1h-2zM503,212h1v1h-1zM564,212h1v1h-1zM467,171h1v1h-1zM601,171h1v1h-1zM469,173h1v1h-1zM599,173h1v1h-1zM496,202h1v1h-1zM573,202h1v1h-1zM499,207h1v1h-1zM568,207h1v1h-1zM481,185h1v1h-1zM587,185h1v1h-1zM500,208h1v1h-1zM568,208h1v1h-1zM463,167h1v1h-1zM606,167h1v1h-1zM489,194h1v1h-1zM579,194h1v1h-1zM473,176h1v1h-1zM596,176h1v1h-1zM475,178h1v1h-1zM594,178h1v1h-1zM510,221h1v1h-1zM557,221h1v1h-1zM457,161h1v1h-1zM614,161h2v1h-2zM504,213h1v1h-1zM563,213h1v1h-1zM462,166h1v1h-1zM607,166h1v1h-1zM512,223h1v1h-1zM555,223h1v1h-1zM509,219h1v1h-1zM558,219h1v1h-1zM491,197h1v1h-1zM576,197h1v1h-1zM468,172h1v1h-1zM600,172h1v1h-1zM482,186h1v1h-1zM586,186h1v1h-1zM519,230h1v1h-1zM549,230h1v1h-1zM492,198h1v1h-1zM576,198h1v1h-1z" fill="#00FF00" shape-rendering="crispEdges"/>
<rect x="56" y="99" width="111" height="1" fill="#000000"/>
<rect x="56" y="99" width="1" height="80" fill="#000000"/>
<rect x="56" y="198" width="1" height="81" fill="#000000"/>
<rect x="56" y="278" width="201" height="1" fill="#000000"/>
<rect x="256" y="129" width="1" height="108" fill="#000000"/>
<rect x="256" y="260" width="1" height="19" fill="#000000"/>
<rect x="252" y="236" width="9" height="1" fill="#000000"/>
<rect x="252" y="260" width="9" height="1" fill="#000000"/>
<rect x="252" y="236" width="1" height="25" fill="#000000"/>
<rect x="260" y="236" width="1" height="25" fill="#000000"/>
<rect x="179" y="129" width="78" height="1" fill="#000000"/>
<rect x="176" y="127" width="3" height="1" fill="#000000"/>
<rect x="172" y="128" width="7" height="1" fill="#000000"/>
<rect x="171" y="129" width="8" height="1" fill="#000000"/>
<rect x="173" y="130" width="6" height="1" fill="#000000"/>
<rect x="177" y="131" width="2" height="1" fill="#000000"/>
<rect x="166" y="99" width="1" height="19" fill="#000000"/>
<rect x="162" y="117" width="9" height="1" fill="#000000"/>
<rect x="162" y="141" width="9" height="1" fill="#000000"/>
<rect x="162" y="117" width="1" height="25" fill="#000000"/>
<rect x="170" y="117" width="1" height="25" fill="#000000"/>
<rect x="166" y="141" width="1" height="96" fill="#000000"/>
<rect x="162" y="236" width="9" height="1" fill="#000000"/>
<rect x="162" y="260" width="9" height="1" fill="#000000"/>
<rect x="162" y="236" width="1" height="25" fill="#000000"/>
<rect x="170" y="236" width="1" height="25" fill="#000000"/>
<rect x="166" y="260" width="1" height="19" fill="#000000"/>
<rect x="162" y="177" width="9" height="23" fill="#FFFFFF"/>
<rect x="162" y="176" width="9" height="1" fill="#000000"/>
<rect x="162" y="200" width="9" height="1" fill="#000000"/>
<rect x="162" y="176" width="1" height="25" fill="#000000"/>
<rect x="170" y="176" width="1" height="25" fill="#000000"/>
<rect x="162" y="237" width="9" height="23" fill="#FFFFFF"/>
<rect x="162" y="236" width="9" height="1" fill="#000000"/>
<rect x="162" y="260" width="9" height="1" fill="#000000"/>
<rect x="162" y="236" width="1" height="25" fill="#000000"/>
<rect x="170" y="236" width="1" height="25" fill="#000000"/>
<rect x="163" y="118" width="7" height="23" fill="#FFFFFF"/>
<rect x="162" y="117" width="9" height="1" fill="#000000"/>
<rect x="162" y="141" width="9" height="1" fill="#000000"/>
<rect x="162" y="117" width="1" height="25" fill="#000000"/>
<rect x="170" y="117" width="1" height="25" fill="#000000"/>
<rect x="106" y="99" width="1" height="19" fill="#000000"/>
<rect x="103" y="118" width="7" height="23" fill="#FFFFFF"/>
<rect x="102" y="117" width="9" height="1" fill="#000000"/>
<rect x="102" y="141" width="9" height="1" fill="#000000"/>
<rect x="102" y="117" width="1" height="25" fill="#000000"/>
<rect x="110" y="117" width="1" height="25" fill="#000000"/>
<rect x="106" y="141" width="1" height="78" fill="#000000"/>
<rect x="253" y="237" width="7" height="23" fill="#FFFFFF"/>
<rect x="106" y="158" width="61" height="1" fill="#000000"/>
<rect x="106" y="218" width="61" height="1" fill="#000000"/>
<rect x="131" y="93" width="5" height="13" fill="#000000"/>
<rect x="137" y="93" width="5" height="13" fill="#000000"/>
<rect x="136" y="93" width="1" height="13" fill="#FFFFFF"/>
<rect x="131" y="152" width="5" height="13" fill="#000000"/>
<rect x="137" y="152" width="5" height="13" fill="#000000"/>
<rect x="136" y="152" width="1" height="13" fill="#FFFFFF"/>
<rect x="131" y="212" width="5" height="13" fill="#000000"/>
<rect x="137" y="212" width="5" height="13" fill="#000000"/>
<rect x="136" y="212" width="1" height="13" fill="#FFFFFF"/>
<rect x="166" y="168" width="21" height="1" fill="#000000"/>
<rect x="186" y="168" width="1" height="21" fill="#000000"/>
<rect x="179" y="188" width="8" height="1" fill="#000000"/>
<rect x="176" y="186" width="3" height="1" fill="#000000"/>
<rect x="172" y="187" width="7" height="1" fill="#000000"/>
<rect x="171" y="188" width="8" height="1" fill="#000000"/>
<rect x="173" y="189" width="6" height="1" fill="#000000"/>
<rect x="177" y="190" width="2" height="1" fill="#000000"/>
<rect x="166" y="228" width="21" height="1" fill="#000000"/>
<rect x="186" y="228" width="1" height="21" fill="#000000"/>
<rect x="179" y="248" width="8" height="1" fill="#000000"/>
<rect x="176" y="246" width="3" height="1" fill="#000000"/>
<rect x="172" y="247" width="7" height="1" fill="#000000"/>
<rect x="171" y="248" width="8" height="1" fill="#000000"/>
<rect x="173" y="249" width="6" height="1" fill="#000000"/>
<rect x="177" y="250" width="2" height="1" fill="#000000"/>
<rect x="106" y="96" width="2" height="1" fill="#000000"/>
<rect x="105" y="97" width="4" height="1" fill="#000000"/>
<rect x="104" y="98" width="5" height="2" fill="#000000"/>
<rect x="105" y="100" width="4" height="1" fill="#000000"/>
<rect x="106" y="156" width="2" height="1" fill="#000000"/>
<rect x="105" y="157" width="4" height="1" fill="#000000"/>
<rect x="104" y="158" width="5" height="2" fill="#000000"/>
<rect x="105" y="160" width="4" height="1" fill="#000000"/>
<rect x="166" y="156" width="2" height="1" fill="#000000"/>
<rect x="165" y="157" width="4" height="1" fill="#000000"/>
<rect x="164" y="158" width="5" height="2" fill="#000000"/>
<rect x="165" y="160" width="4" height="1" fill="#000000"/>
<rect x="166" y="166" width="2" height="1" fill="#000000"/>
<rect x="165" y="167" width="4" height="1" fill="#000000"/>
<rect x="164" y="168" width="5" height="2" fill="#000000"/>
<rect x="165" y="170" width="4" height="1" fill="#000000"/>
<rect x="166" y="216" width="2" height="1" fill="#000000"/>
<rect x="165" y="217" width="4" height="1" fill="#000000"/>
<rect x="164" y="218" width="5" height="2" fill="#000000"/>
<rect x="165" y="220" width="4" height="1" fill="#000000"/>
<rect x="166" y="226" width="2" height="1" fill="#000000"/>
<rect x="165" y="227" width="4" height="1" fill="#000000"/>
<rect x="164" y="228" width="5" height="2" fill="#000000"/>
<rect x="165" y="230" width="4" height="1" fill="#000000"/>
<rect x="166" y="276" width="2" height="1" fill="#000000"/>
<rect x="165" y="277" width="4" height="1" fill="#000000"/>
<rect x="164" y="278" width="5" height="2" fill="#000000"/>
<rect x="165" y="280" width="4" height="1" fill="#000000"/>
<rect x="47" y="179" width="19" height="19" fill="#FFFFFF"/>
<rect x="55" y="178" width="1" height="1" fill="#000000"/>
<rect x="56" y="178" width="1" height="1" fill="#000000"/>
<rect x="57" y="178" width="1" height="1" fill="#000000"/>
<rect x="53" y="179" width="1" height="1" fill="#000000"/>
<rect x="54" y="179" width="1" height="1" fill="#000000"/>
<rect x="58" y="179" width="1" height="1" fill="#000000"/>
<rect x="59" y="179" width="1" height="1" fill="#000000"/>
<rect x="51" y="180" width="1" height="1" fill="#000000"/>
<rect x="52" y="180" width="1" height="1" fill="#000000"/>
<rect x="60" y="180" width="1" height="1" fill="#000000"/>
<rect x="61" y="180" width="1" height="1" fill="#000000"/>
<rect x="50" y="181" width="1" height="1" fill="#000000"/>
<rect x="62" y="181" width="1" height="1" fill="#000000"/>
<rect x="63" y="181" width="1" height="1" fill="#000000"/>
<rect x="49" y="182" width="1" height="1" fill="#000000"/>
<rect x="64" y="182" width="1" height="1" fill="#000000"/>
<rect x="48" y="183" width="1" height="1" fill="#000000"/>
<rect x="65" y="183" width="1" height="1" fill="#000000"/>
<rect x="48" y="184" width="1" height="1" fill="#000000"/>
<rect x="65" y="184" width="1" height="1" fill="#000000"/>
<rect x="47" y="185" width="1" height="1" fill="#000000"/>
<rect x="65" y="185" width="1" height="1" fill="#000000"/>
<rect x="47" y="186" width="1" height="1" fill="#000000"/>
<rect x="66" y="186" width="1" height="1" fill="#000000"/>
<rect x="46" y="187" width="1" height="1" fill="#000000"/>
<rect x="66" y="187" width="1" height="1" fill="#000000"/>
<rect x="46" y="188" width="1" height="1" fill="#000000"/>
<rect x="66" y="188" width="1" height="1" fill="#000000"/>
<rect x="46" y="189" width="1" height="1" fill="#000000"/>
<rect x="66" y="189" width="1" height="1" fill="#000000"/>
<rect x="47" y="190" width="1" height="1" fill="#000000"/>
<rect x="66" y="190" width="1" height="1" fill="#000000"/>
<rect x="47" y="191" width="1" height="1" fill="#000000"/>
<rect x="65" y="191" width="1" height="1" fill="#000000"/>
<rect x="48" y="192" width="1" height="1" fill="#000000"/>
<rect x="65" y="192" width="1" height="1" fill="#000000"/>
<rect x="48" y="193" width="1" height="1" fill="#000000"/>
<rect x="65" y="193" width="1" height="1" fill="#000000"/>
<rect x="49" y="194" width="1" height="1" fill="#000000"/>
<rect x="64" y="194" width="1" height="1" fill="#000000"/>
<rect x="49" y="195" width="1" height="1" fill="#000000"/>
<rect x="63" y="195" width="1" height="1" fill="#000000"/>
<rect x="50" y="196" width="1" height="1" fill="#000000"/>
<rect x="62" y="196" width="1" height="1" fill="#000000"/>
<rect x="51" y="197" width="1" height="1" fill="#000000"/>
<rect x="52" y="197" width="1" height="1" fill="#000000"/>
<rect x="59" y="197" width="1" height="1" fill="#000000"/>
<rect x="60" y="197" width="1" height="1" fill="#000000"/>
<rect x="61" y="197" width="1" height="1" fill="#000000"/>
<rect x="53" y="198" width="1" height="1" fill="#000000"/>
<rect x="54" y="198" width="1" height="1" fill="#000000"/>
<rect x="55" y="198" width="1" height="1" fill="#000000"/>
<rect x="56" y="198" width="1" height="1" fill="#000000"/>
<rect x="57" y="198" width="1" height="1" fill="#000000"/>
<rect x="58" y="198" width="1" height="1" fill="#000000"/>
<rect x="51" y="188" width="1" height="1" fill="#000000"/>
<rect x="52" y="187" width="1" height="1" fill="#000000"/>
<rect x="53" y="187" width="1" height="1" fill="#000000"/>
<rect x="54" y="187" width="1" height="1" fill="#000000"/>
<rect x="55" y="187" width="1" height="1" fill="#000000"/>
<rect x="56" y="188" width="1" height="1" fill="#000000"/>
<rect x="57" y="189" width="1" height="1" fill="#000000"/>
<rect x="58" y="190" width="1" height="1" fill="#000000"/>
<rect x="59" y="190" width="1" height="1" fill="#000000"/>
<rect x="60" y="190" width="1" height="1" fill="#000000"/>
<rect x="61" y="189" width="1" height="1" fill="#000000"/>
<rect x="61" y="188" width="1" height="1" fill="#000000"/>
<text transform="translate(130.27,78) scale(0.7273,1)" x="0" y="0" font-size="12" fill="#000000" letter-spacing="0.300" class="b">C1</text>
<text transform="translate(122.96,92) scale(0.8400,1)" x="0" y="0" font-size="12" fill="#000000" letter-spacing="0.488" class="b">2,2nF</text>
<text transform="translate(177.06,106) scale(0.8400,1)" x="0" y="0" font-size="12" fill="#000000" letter-spacing="0.338" class="b">R2 (Treble)</text>
<text transform="translate(177.06,120) scale(0.8400,1)" x="0" y="0" font-size="12" fill="#000000" letter-spacing="1.310" class="b">25k0</text>
<text transform="translate(261.00,129) scale(0.8163,1)" x="0" y="0" font-size="12" fill="#000000" letter-spacing="0.300" class="b">Out</text>
<text transform="translate(84.12,130) scale(0.7762,1)" x="0" y="0" font-size="12" fill="#000000" letter-spacing="0.300" class="b">R1</text>
<text transform="translate(72.06,144) scale(0.8400,1)" x="0" y="0" font-size="12" fill="#000000" letter-spacing="1.190" class="b">10k0</text>
<text transform="translate(129.86,136) scale(0.8400,1)" x="0" y="0" font-size="12" fill="#000000" letter-spacing="0.643" class="b">C2</text>
<text transform="translate(118.06,150) scale(0.8400,1)" x="0" y="0" font-size="12" fill="#000000" letter-spacing="0.557" class="b">1000nF</text>
<text transform="translate(68.10,187) scale(0.8400,1)" x="0" y="0" font-size="12" fill="#000000" letter-spacing="0.508" class="b">Zsrc</text>
<text transform="translate(68.06,203) scale(0.8400,1)" x="0" y="0" font-size="12" fill="#000000" letter-spacing="1.595" class="b">5k0</text>
<text transform="translate(193.06,190) scale(0.8364,1)" x="0" y="0" font-size="12" fill="#000000" letter-spacing="0.300" class="b">R3 (Bass)</text>
<text transform="translate(193.06,204) scale(0.8400,1)" x="0" y="0" font-size="12" fill="#000000" letter-spacing="1.310" class="b">25k0</text>
<text transform="translate(129.96,197) scale(0.8400,1)" x="0" y="0" font-size="12" fill="#000000" letter-spacing="0.762" class="b">C3</text>
<text transform="translate(122.00,211) scale(0.8182,1)" x="0" y="0" font-size="12" fill="#000000" letter-spacing="0.300" class="b">470nF</text>
<text transform="translate(116.96,249) scale(0.8400,1)" x="0" y="0" font-size="12" fill="#000000" letter-spacing="0.415" class="b">R4 (Mid)</text>
<text transform="translate(132.10,263) scale(0.8400,1)" x="0" y="0" font-size="12" fill="#000000" letter-spacing="0.619" class="b">7500</text>
<text transform="translate(201.76,245) scale(0.8400,1)" x="0" y="0" font-size="12" fill="#000000" letter-spacing="0.324" class="b">R5 (load)</text>
<text transform="translate(222.26,261) scale(0.8400,1)" x="0" y="0" font-size="12" fill="#000000" letter-spacing="1.440" class="b">1M0</text>
</svg>
</body></html>
